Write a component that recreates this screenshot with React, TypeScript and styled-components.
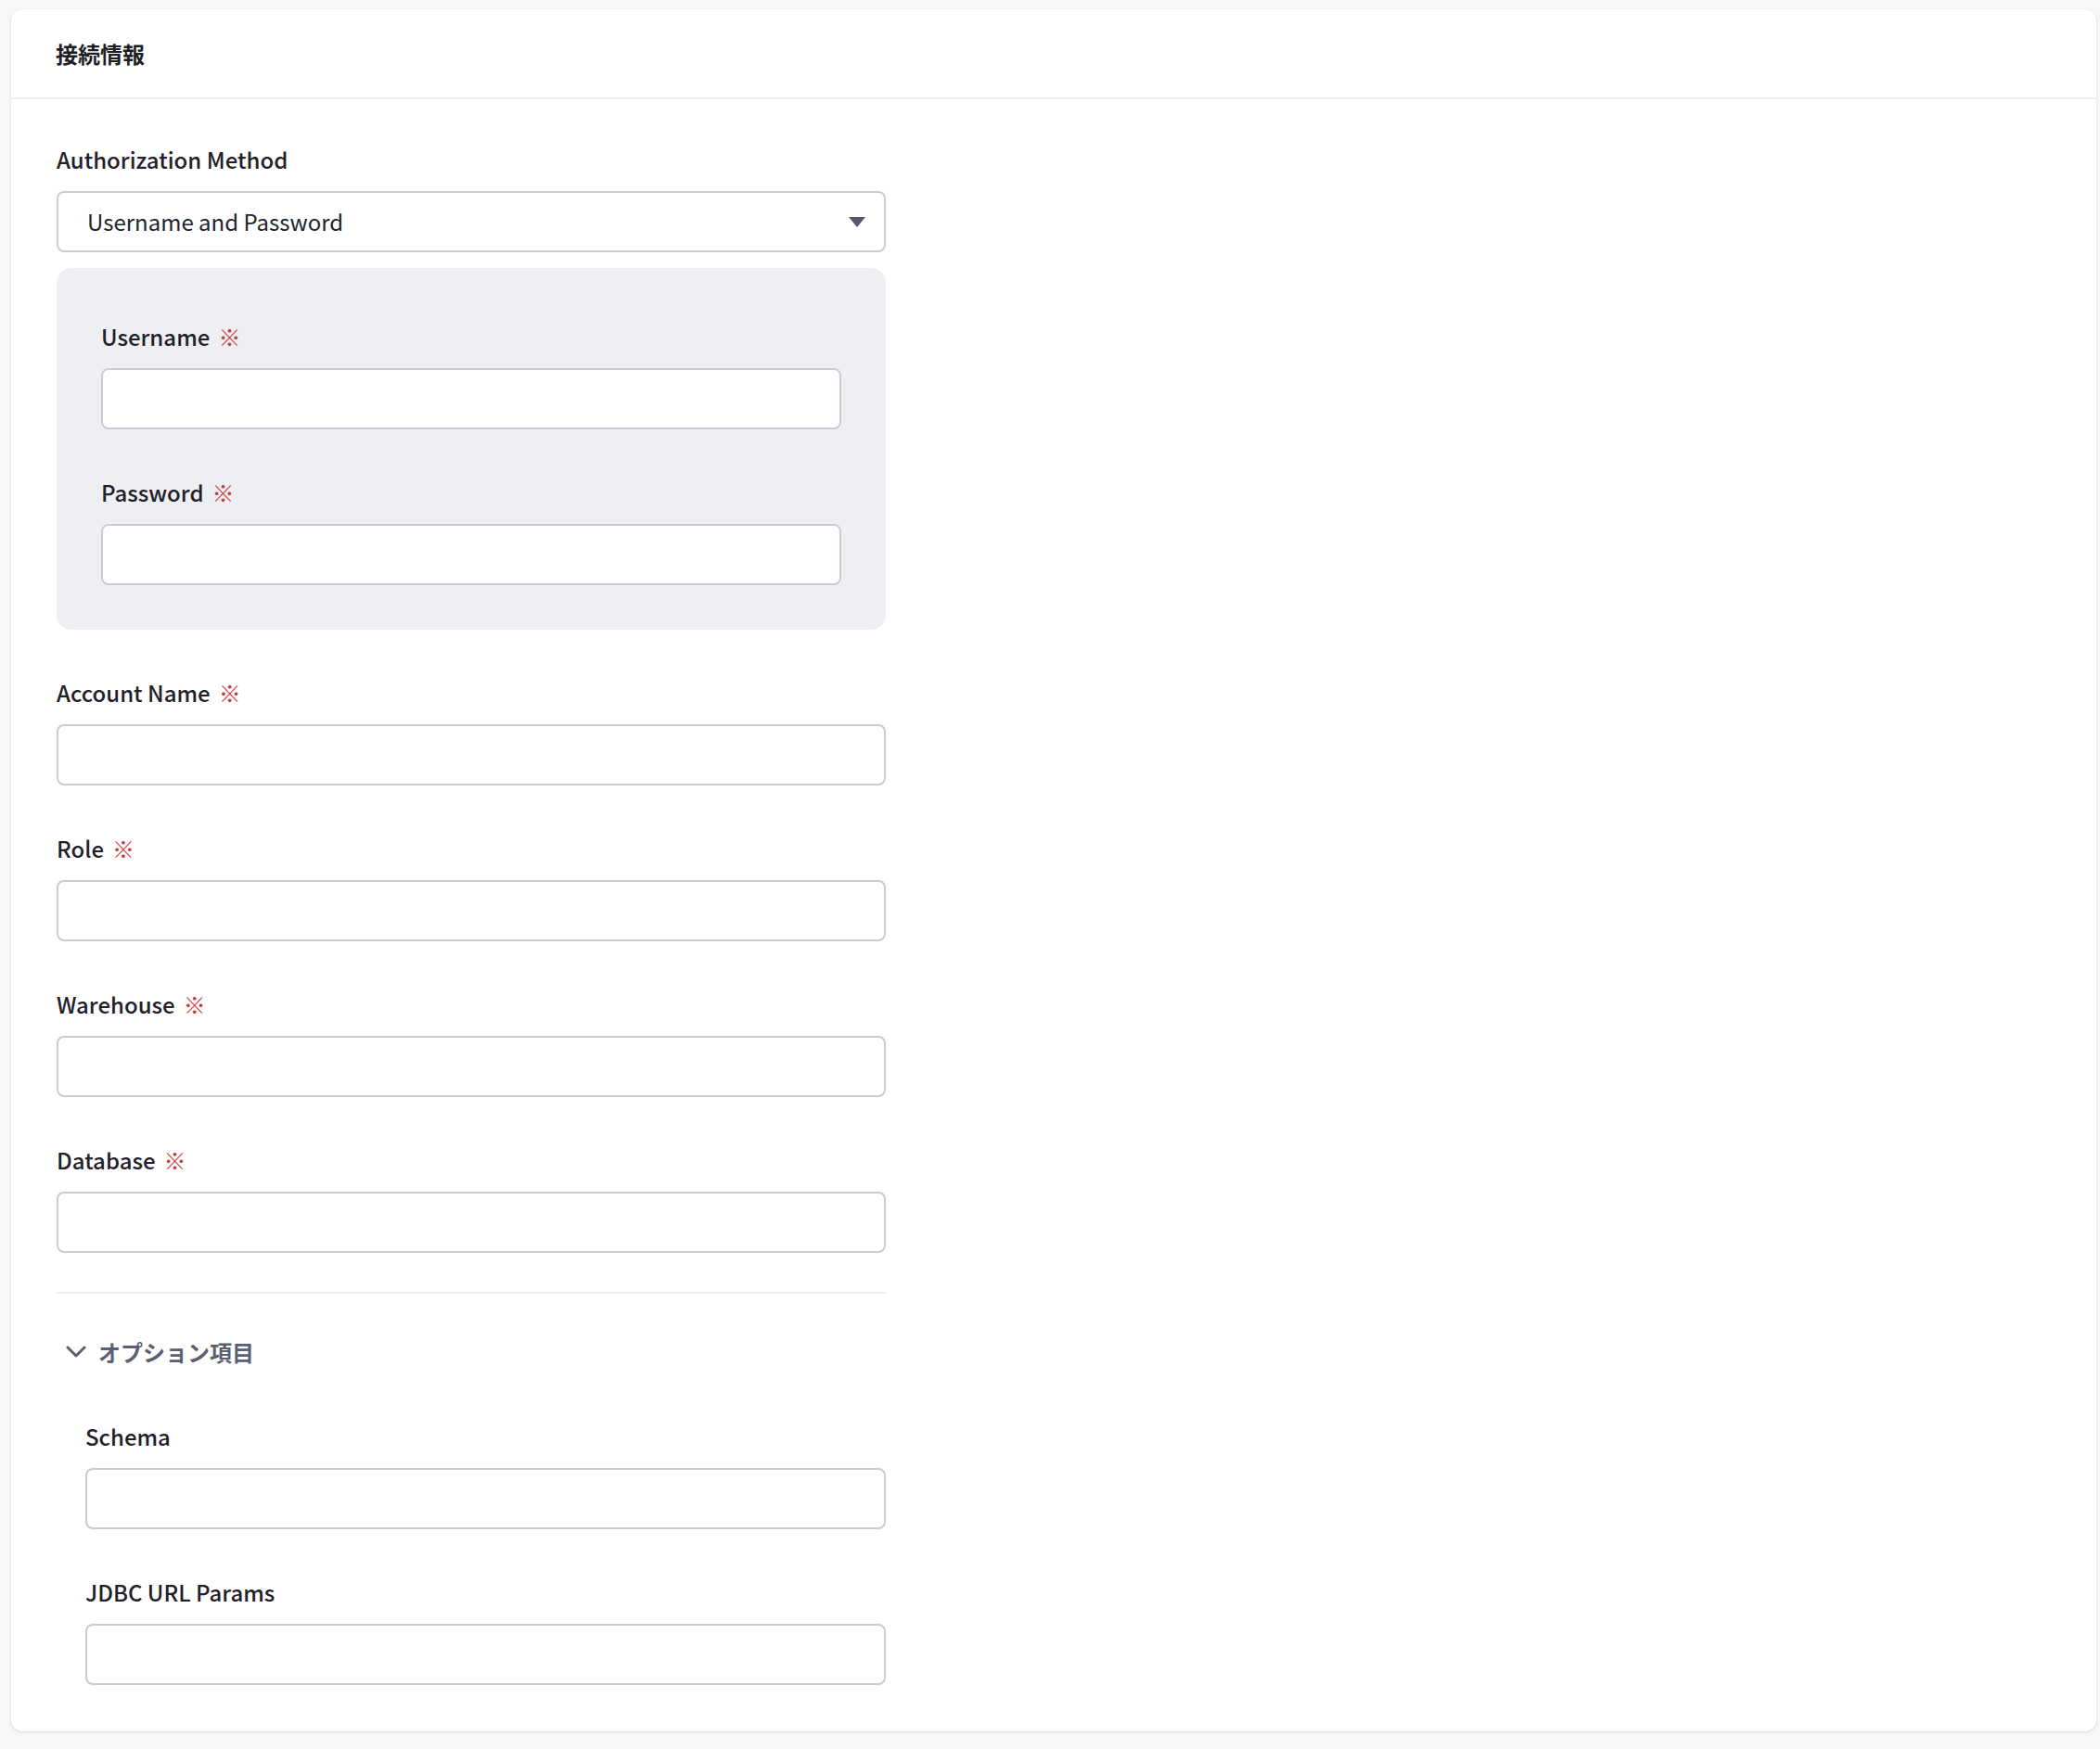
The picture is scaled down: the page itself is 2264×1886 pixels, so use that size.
import styled, { createGlobalStyle } from "styled-components";

const GlobalStyle = createGlobalStyle`
  html, body {
    margin: 0;
    padding: 0;
    background: #f6f7f9;
    font-family: "Noto Sans CJK JP", "Noto Sans", sans-serif;
    color: #1f2029;
  }
  * {
    box-sizing: border-box;
  }
`;

const requiredFields = ["Account Name", "Role", "Warehouse", "Database"];
const optionFields = ["Schema", "JDBC URL Params"];

export default function App() {
  return (
    <Page>
      <GlobalStyle />
      <Card>
        <CardHeader>
          <Title>接続情報</Title>
        </CardHeader>
        <CardBody>
          <Form>
            <div>
              <Label>Authorization Method</Label>
              <SelectBox>
                <span>Username and Password</span>
                <svg width="18" height="11" viewBox="0 0 18 11">
                  <path d="M0 0 L18 0 L9 11 Z" fill="#545869" />
                </svg>
              </SelectBox>
              <SubPanel>
                <Field>
                  <Label>
                    Username<Required>※</Required>
                  </Label>
                  <Input type="text" />
                </Field>
                <Field>
                  <Label>
                    Password<Required>※</Required>
                  </Label>
                  <Input type="password" />
                </Field>
              </SubPanel>
            </div>
            {requiredFields.map((name) => (
              <Field key={name}>
                <Label>
                  {name}
                  <Required>※</Required>
                </Label>
                <Input type="text" />
              </Field>
            ))}
          </Form>
          <Divider />
          <OptionToggle>
            <svg width="22" height="14" viewBox="0 0 22 14">
              <path
                d="M2 2 L11 11 L20 2"
                fill="none"
                stroke="#5b5f72"
                strokeWidth="3"
                strokeLinecap="round"
                strokeLinejoin="round"
              />
            </svg>
            <span>オプション項目</span>
          </OptionToggle>
          <OptionFields>
            {optionFields.map((name) => (
              <Field key={name}>
                <Label>{name}</Label>
                <Input type="text" />
              </Field>
            ))}
          </OptionFields>
        </CardBody>
      </Card>
    </Page>
  );
}

const Page = styled.div`
  min-height: 1886px;
  padding: 10px 4px 19px 12px;
`;

const Card = styled.div`
  background: #ffffff;
  border-radius: 12px;
  box-shadow: 0 1px 3px rgba(20, 24, 40, 0.12), 0 0 1px rgba(20, 24, 40, 0.1);
  min-height: 1857px;
`;

const CardHeader = styled.div`
  height: 97px;
  display: flex;
  align-items: center;
  padding: 0 48px;
  border-bottom: 2px solid #f0f1f3;
`;

const Title = styled.h2`
  margin: 0;
  font-size: 24px;
  line-height: 36px;
  font-weight: 700;
  color: #1e1f26;
`;

const CardBody = styled.div`
  padding: 47px 49px 50px 49px;
  width: 992px;
`;

const Form = styled.div`
  display: flex;
  flex-direction: column;
  gap: 50px;
`;

const Field = styled.div`
  display: flex;
  flex-direction: column;
`;

const Label = styled.label`
  display: block;
  font-size: 24px;
  line-height: 36px;
  font-weight: 500;
  color: #1f2029;
  margin-bottom: 16px;
`;

const Required = styled.span`
  color: #c9373a;
  font-weight: 400;
  margin-left: 9px;
`;

const Input = styled.input`
  height: 66px;
  width: 100%;
  border: 2px solid #cbcbd3;
  border-radius: 8px;
  background: #ffffff;
  padding: 0 26px;
  font-size: 24px;
  font-family: inherit;
  outline: none;
`;

const SelectBox = styled.div`
  height: 66px;
  display: flex;
  align-items: center;
  justify-content: space-between;
  border: 2px solid #cbcbd3;
  border-radius: 8px;
  padding: 0 20px 0 31px;
  font-size: 24px;
  color: #22232b;
  background: #ffffff;
  span {
    line-height: 1;
  }
`;

const SubPanel = styled.div`
  margin-top: 17px;
  background: #eeeff2;
  border-radius: 16px;
  padding: 56px 48px 48px;
  display: flex;
  flex-direction: column;
  gap: 50px;
`;

const Divider = styled.hr`
  border: none;
  border-top: 2px solid #f0f1f3;
  margin: 42px 0 0;
`;

const OptionToggle = styled.button`
  margin-top: 45px;
  display: flex;
  align-items: center;
  gap: 13px;
  padding: 0 0 0 10px;
  border: none;
  background: none;
  font-family: inherit;
  font-size: 24px;
  line-height: 36px;
  font-weight: 700;
  color: #5b5f72;
  cursor: pointer;
`;

const OptionFields = styled.div`
  margin-top: 55px;
  padding-left: 31px;
  display: flex;
  flex-direction: column;
  gap: 50px;
`;
